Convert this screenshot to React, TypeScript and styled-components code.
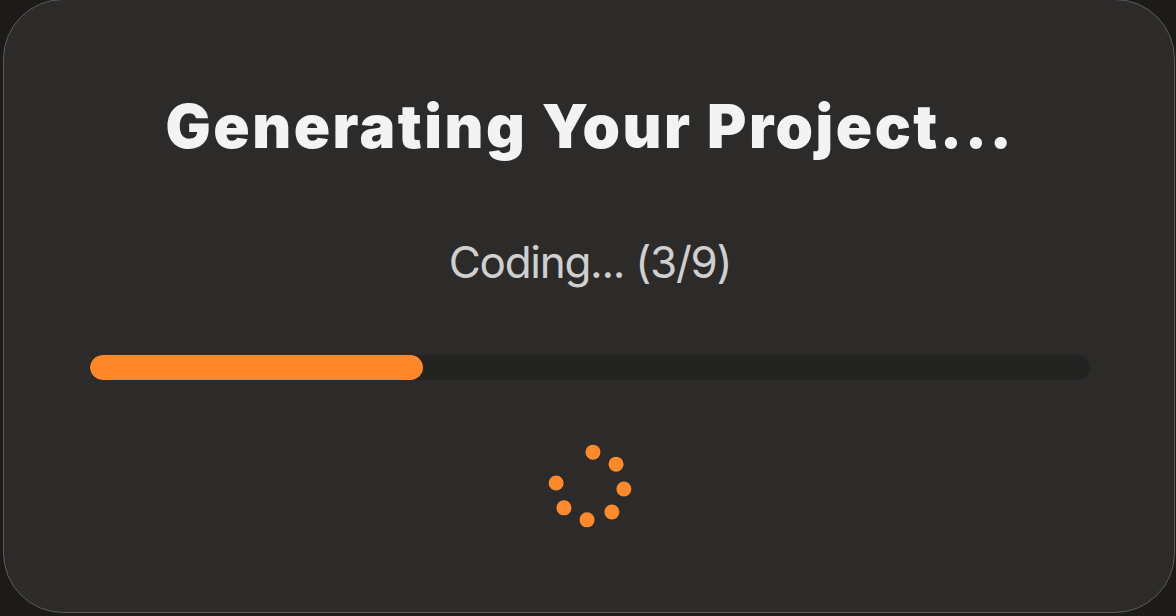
import React from 'react';
import styled, { createGlobalStyle } from 'styled-components';

const GlobalStyle = createGlobalStyle`
  html, body {
    margin: 0;
    padding: 0;
    background: #1c1b1a;
  }
  body {
    font-family: Inter, 'Noto Sans', sans-serif;
  }
`;

// whole window, card sits nearly edge to edge
const Screen = styled.div`
  width: 1176px;
  height: 616px;
  padding: 0 1px 3px 3px;
  box-sizing: border-box;
  overflow: hidden;
`;

const Card = styled.div`
  margin-top: -1px;
  height: 614px;
  box-sizing: border-box;
  background: #2c2b2a;
  border: 1.5px solid #5c5b5a;
  border-radius: 60px;
  display: flex;
  flex-direction: column;
  align-items: center;
  padding: 88px 84px 0 86px;
`;

const Title = styled.h1`
  margin: 0;
  color: #f3f3f3;
  font-family: Inter, 'DejaVu Sans', sans-serif;
  font-weight: 900;
  font-size: 60px;
  line-height: 76px;
  letter-spacing: 2.5px;
  font-feature-settings: 'calt' 0, 'liga' 0;
`;

const Status = styled.p`
  margin: 70px 0 0;
  color: #cfcfcf;
  font-family: Inter, 'Noto Sans', sans-serif;
  font-weight: 400;
  font-size: 44px;
  line-height: 56px;
  letter-spacing: -1.3px;
  font-feature-settings: 'calt' 0, 'liga' 0;
`;

const Track = styled.div`
  margin-top: 65px;
  width: 100%;
  height: 25px;
  border-radius: 13px;
  background: #232322;
  overflow: hidden;
`;

const Fill = styled.div`
  height: 100%;
  border-radius: 13px;
  background: #ff8629;
`;

const SpinnerBox = styled.div`
  margin-top: 61px;
  width: 90px;
  height: 90px;
`;

type SpinnerProps = { count: number; radius: number };

function Spinner({ count, radius }: SpinnerProps) {
  const dots = Array.from({ length: count }, (_, k) => {
    const a = ((-85 + 45 * k) * Math.PI) / 180;
    return { x: 45 + radius * Math.cos(a), y: 45 + radius * Math.sin(a) };
  });
  return (
    <SpinnerBox>
      <svg width="90" height="90" viewBox="0 0 90 90">
        {dots.map((d, i) => (
          <circle key={i} cx={d.x} cy={d.y} r="7.5" fill="#ff8a2c" />
        ))}
      </svg>
    </SpinnerBox>
  );
}

export default function App() {
  const step = 3;
  const total = 9;
  return (
    <>
      <GlobalStyle />
      <Screen>
        <Card>
          <Title>Generating Your Project...</Title>
          <Status>
            Coding... ({step}/{total})
          </Status>
          <Track>
            <Fill style={{ width: `${(step / total) * 100}%` }} />
          </Track>
          <Spinner count={7} radius={34} />
        </Card>
      </Screen>
    </>
  );
}
